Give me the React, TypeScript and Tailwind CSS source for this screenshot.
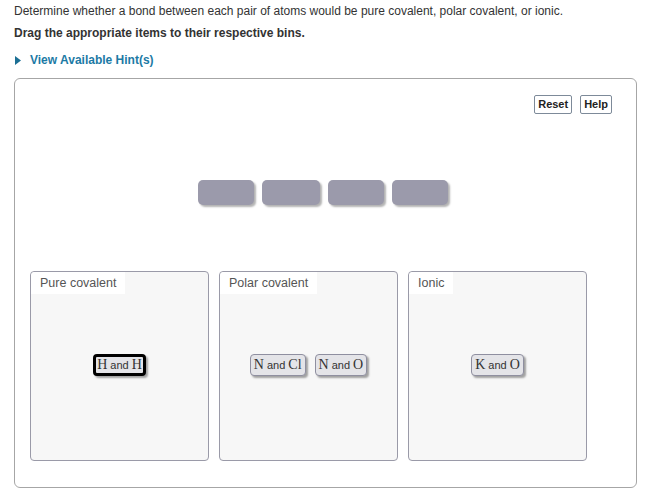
import React from "react";

function Token({ a, b, selected }: { a: string; b: string; selected?: boolean }) {
  return (
    <div
      className={
        "h-[22px] flex items-center rounded-[4px] bg-[#e4e4e8] shadow-[2px_2px_2px_rgba(0,0,0,0.35)] text-[#333] " +
        (selected ? "border-[3px] border-black px-[1px] rounded-[3px]" : "border border-[#8f8fa0] px-[3px]")
      }
    >
      <span className="text-[14px] leading-none [font-family:'Liberation_Serif',serif]">{a}</span>
      <span className="text-[11px] leading-none mx-[3px] [font-family:'Liberation_Sans',sans-serif]">and</span>
      <span className="text-[14px] leading-none [font-family:'Liberation_Serif',serif]">{b}</span>
    </div>
  );
}

function Bin({ label, children }: { label: string; children: React.ReactNode }) {
  return (
    <div className="w-[179px] h-[190px] border border-[#9a9aa8] rounded-[4px] bg-[#f7f7f7] flex flex-col">
      <div className="self-start bg-white h-[22px] pl-[9px] pr-[9px] pt-[1px] flex items-center text-[12.5px] text-[#555] rounded-tl-[4px]">
        {label}
      </div>
      <div className="flex-1 flex items-center justify-center gap-[9px] pb-[24px]">{children}</div>
    </div>
  );
}

export default function App() {
  return (
    <div className="w-[656px] h-[496px] bg-white [font-family:'Liberation_Sans',Arial,sans-serif] text-[#333] pl-[14px] pt-[3px]">
      <div className="text-[12px] leading-[16px]">
        Determine whether a bond between each pair of atoms would be pure covalent, polar covalent, or ionic.
      </div>
      <div className="text-[12px] leading-[16px] font-bold mt-[6px]">Drag the appropriate items to their respective bins.</div>
      <div className="flex items-center mt-[11px] text-[12px] leading-[16px] font-bold text-[#1c7aa5]">
        <svg width="6" height="9" viewBox="0 0 6 9" className="ml-[1px] mr-[9px]">
          <polygon points="0,0 6,4.5 0,9" fill="#1c6f94" />
        </svg>
        View Available Hint(s)
      </div>
      <div className="mt-[10px] w-[623px] h-[410px] border border-[#a6a6a6] rounded-[6px] flex flex-col">
        <div className="flex justify-end gap-[8px] pr-[24px] pt-[16px]">
          <button className="h-[19px] px-[3px] border border-[#7d8a99] rounded-[2px] bg-white text-[11px] font-bold text-[#222] leading-none">
            Reset
          </button>
          <button className="h-[19px] px-[3px] border border-[#7d8a99] rounded-[2px] bg-white text-[11px] font-bold text-[#222] leading-none">
            Help
          </button>
        </div>
        <div className="flex justify-center gap-[8px] mt-[66px] pr-[5px]">
          <div className="w-[56px] h-[25px] rounded-[5px] bg-[#9b9aab] shadow-[2px_2px_2px_rgba(0,0,0,0.3)]" />
          <div className="w-[58px] h-[25px] rounded-[5px] bg-[#9b9aab] shadow-[2px_2px_2px_rgba(0,0,0,0.3)]" />
          <div className="w-[56px] h-[25px] rounded-[5px] bg-[#9b9aab] shadow-[2px_2px_2px_rgba(0,0,0,0.3)]" />
          <div className="w-[56px] h-[25px] rounded-[5px] bg-[#9b9aab] shadow-[2px_2px_2px_rgba(0,0,0,0.3)]" />
        </div>
        <div className="flex gap-[10px] pl-[15px] mt-[66px]">
          <Bin label="Pure covalent">
            <Token a="H" b="H" selected />
          </Bin>
          <Bin label="Polar covalent">
            <Token a="N" b="Cl" />
            <Token a="N" b="O" />
          </Bin>
          <Bin label="Ionic">
            <Token a="K" b="O" />
          </Bin>
        </div>
      </div>
    </div>
  );
}
